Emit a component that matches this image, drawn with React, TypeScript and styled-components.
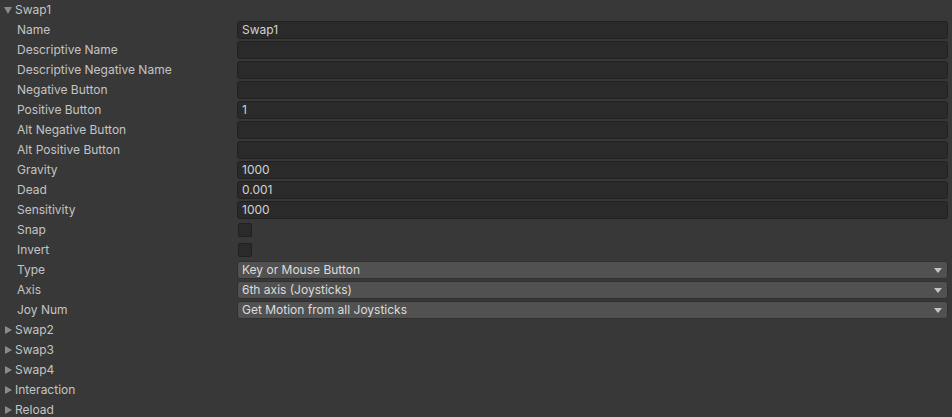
import React from "react";
import styled, { createGlobalStyle } from "styled-components";

const GlobalStyle = createGlobalStyle`
  *, *::before, *::after {
    box-sizing: border-box;
  }
  html, body {
    margin: 0;
    padding: 0;
    background: #383838;
  }
  body {
    font-family: Inter, "Noto Sans", sans-serif;
    font-size: 12px;
    color: #c4c4c4;
  }
`;

const Panel = styled.div`
  width: 952px;
  height: 417px;
  overflow: hidden;
  background: #383838;
`;

const Header = styled.div`
  display: flex;
  align-items: center;
  height: 20px;
  padding-left: 4px;
  padding-bottom: 1px;
`;

const Arrow = styled.div<{ open: boolean }>`
  width: 0;
  height: 0;
  margin-right: 3px;
  ${(p) =>
    p.open
      ? `border-left: 4px solid transparent;
         border-right: 4px solid transparent;
         border-top: 7px solid #8a8a8a;
         margin-top: 1px;`
      : `border-top: 4px solid transparent;
         border-bottom: 4px solid transparent;
         border-left: 7px solid #8a8a8a;
         margin-left: 1px;`}
`;

const Row = styled.div`
  display: grid;
  grid-template-columns: 237px 1fr;
  align-items: center;
  height: 20px;
  padding-right: 4px;
`;

const Label = styled.div`
  padding-left: 17px;
  padding-bottom: 1px;
  white-space: nowrap;
`;

const TextField = styled.div`
  height: 18px;
  line-height: 15px;
  background: #2a2a2a;
  border: 1px solid #212121;
  border-radius: 3px;
  padding-left: 4px;
  color: #d2d2d2;
`;

const Check = styled.div`
  width: 14px;
  height: 14px;
  margin-left: 1px;
  background: #2a2a2a;
  border: 1px solid #212121;
  border-radius: 2px;
`;

const Select = styled.div`
  display: flex;
  align-items: center;
  justify-content: space-between;
  height: 18px;
  background: #515151;
  border: 1px solid #303030;
  border-radius: 3px;
  padding: 0 5px 1px 4px;
  color: #dcdcdc;
`;

const Caret = styled.div`
  width: 0;
  height: 0;
  margin-top: 1px;
  border-left: 4px solid transparent;
  border-right: 4px solid transparent;
  border-top: 5px solid #c4c4c4;
`;

type Field =
  | { label: string; kind: "text"; value: string }
  | { label: string; kind: "check" }
  | { label: string; kind: "select"; value: string };

const fields: Field[] = [
  { label: "Name", kind: "text", value: "Swap1" },
  { label: "Descriptive Name", kind: "text", value: "" },
  { label: "Descriptive Negative Name", kind: "text", value: "" },
  { label: "Negative Button", kind: "text", value: "" },
  { label: "Positive Button", kind: "text", value: "1" },
  { label: "Alt Negative Button", kind: "text", value: "" },
  { label: "Alt Positive Button", kind: "text", value: "" },
  { label: "Gravity", kind: "text", value: "1000" },
  { label: "Dead", kind: "text", value: "0.001" },
  { label: "Sensitivity", kind: "text", value: "1000" },
  { label: "Snap", kind: "check" },
  { label: "Invert", kind: "check" },
  { label: "Type", kind: "select", value: "Key or Mouse Button" },
  { label: "Axis", kind: "select", value: "6th axis (Joysticks)" },
  { label: "Joy Num", kind: "select", value: "Get Motion from all Joysticks" },
];

const collapsed = ["Swap2", "Swap3", "Swap4", "Interaction", "Reload"];

const App: React.FC = () => {
  return (
    <Panel>
      <GlobalStyle />
      <Header>
        <Arrow open={true} />
        Swap1
      </Header>
      {fields.map((f, i) => (
        <Row key={i}>
          <Label>{f.label}</Label>
          {f.kind === "text" && <TextField>{f.value}</TextField>}
          {f.kind === "check" && <Check />}
          {f.kind === "select" && (
            <Select>
              {f.value}
              <Caret />
            </Select>
          )}
        </Row>
      ))}
      {collapsed.map((name) => (
        <Header key={name}>
          <Arrow open={false} />
          {name}
        </Header>
      ))}
    </Panel>
  );
};

export default App;
